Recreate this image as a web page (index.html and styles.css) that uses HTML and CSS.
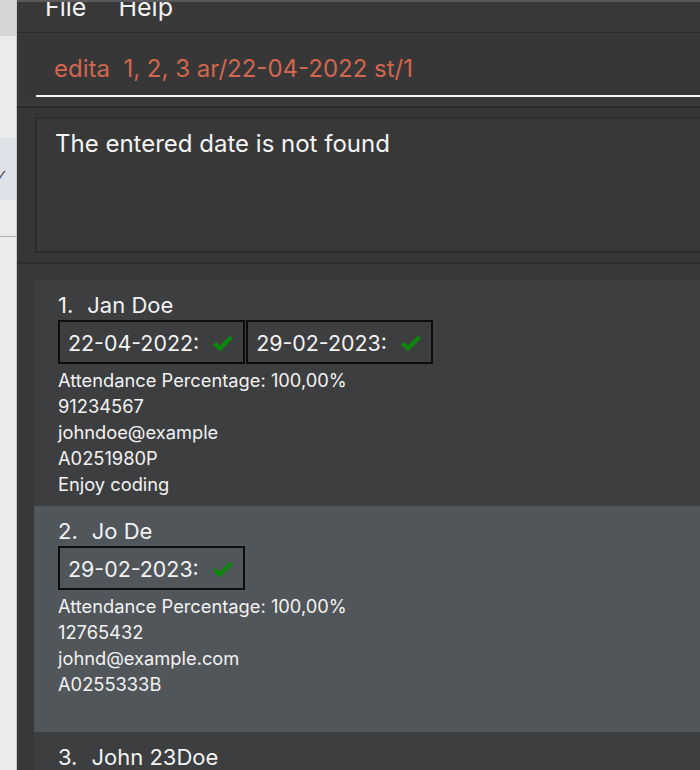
FILE: index.html
```html
<!DOCTYPE html>
<html>
<head>
<meta charset="utf-8">
<link rel="stylesheet" href="styles.css">
</head>
<body>
<div class="page">
  <aside class="sidebar">
    <div class="side-top"></div>
    <div class="side-gap"></div>
    <div class="side-sel"><span class="side-check">✓</span></div>
    <div class="side-gap2"></div>
    <div class="side-rest"></div>
  </aside>
  <main class="app">
    <div class="topline"></div>
    <nav class="menubar">
      <span class="menu-item">File</span>
      <span class="menu-item">Help</span>
    </nav>
    <section class="command">
      <div class="command-input">edita  1, 2, 3 ar/22-04-2022 st/1</div>
    </section>
    <section class="result-pane">
      <div class="result-box">The entered date is not found</div>
    </section>
    <section class="list">
      <div class="card">
        <div class="name"><span class="idx">1.</span>Jan Doe</div>
        <div class="dates">
          <div class="date">22-04-2022:<svg class="check" viewBox="0 0 20 16" width="20" height="16"><path d="M1.5 8.5 L7 13.5 L18.5 2" fill="none" stroke="#0b870b" stroke-width="4.2"/></svg></div>
          <div class="date">29-02-2023:<svg class="check" viewBox="0 0 20 16" width="20" height="16"><path d="M1.5 8.5 L7 13.5 L18.5 2" fill="none" stroke="#0b870b" stroke-width="4.2"/></svg></div>
        </div>
        <div class="lines">
          <div class="line">Attendance Percentage: 100,00%</div>
          <div class="line">91234567</div>
          <div class="line">johndoe@example</div>
          <div class="line">A0251980P</div>
          <div class="line">Enjoy coding</div>
        </div>
      </div>
      <div class="card selected">
        <div class="name"><span class="idx">2.</span>Jo De</div>
        <div class="dates">
          <div class="date">29-02-2023:<svg class="check" viewBox="0 0 20 16" width="20" height="16"><path d="M1.5 8.5 L7 13.5 L18.5 2" fill="none" stroke="#0b870b" stroke-width="4.2"/></svg></div>
        </div>
        <div class="lines">
          <div class="line">Attendance Percentage: 100,00%</div>
          <div class="line">12765432</div>
          <div class="line">johnd@example.com</div>
          <div class="line">A0255333B</div>
          <div class="line"></div>
        </div>
      </div>
      <div class="card">
        <div class="name"><span class="idx">3.</span>John 23Doe</div>
      </div>
    </section>
  </main>
</div>
</body>
</html>
```
FILE: styles.css
```css
html, body {
  margin: 0;
  padding: 0;
  width: 700px;
  height: 770px;
  overflow: hidden;
  background: #383838;
  font-family: "Inter", "Liberation Sans", sans-serif;
}
.page {
  display: flex;
  width: 700px;
  height: 770px;
}
.sidebar {
  width: 17px;
  flex: none;
  display: flex;
  flex-direction: column;
  background: #ebebeb;
  border-right: 1px solid #c8c8c8;
  box-sizing: border-box;
}
.side-top { height: 36px; background: #d6d6d6; }
.side-gap { height: 102px; }
.side-sel {
  height: 62px;
  box-sizing: border-box;
  padding-top: 12px;
  background: #e0e2e9;
  display: flex;
  align-items: center;
  overflow: hidden;
}
.side-check {
  margin-left: -5px;
  font-size: 16px;
  color: #555;
  font-family: "DejaVu Sans", sans-serif;
}
.side-gap2 { height: 36px; border-bottom: 1px solid #b0b0b0; }
.side-rest { flex: 1; }

.app {
  flex: 1;
  display: flex;
  flex-direction: column;
  background: #383838;
  min-width: 0;
}
.topline { height: 2px; background: #5a5a5a; }
.menubar {
  height: 30px;
  flex: none;
  display: flex;
  gap: 32px;
  padding-left: 28px;
  background: #393939;
  border-bottom: 1px solid #2b2b2b;
  overflow: hidden;
  color: #f2f2f2;
  font-size: 25px;
}
.menu-item {
  line-height: 26px;
  margin-top: -8px;
}
.command {
  height: 64px;
  flex: none;
  padding-left: 19px;
  background: #373737;
}
.command-input {
  height: 64px;
  box-sizing: border-box;
  border-bottom: 2px solid #f4f4f4;
  padding-left: 18px;
  padding-top: 22px;
  color: #d3664f;
  font-size: 24px;
  line-height: 28px;
  white-space: pre;
}
.result-pane {
  flex: none;
  margin-top: 9px;
  border-top: 2px solid #2b2b2b;
  border-bottom: 2px solid #2b2b2b;
  padding: 9px 0 9px 18px;
  background: #363636;
}
.result-box {
  height: 136px;
  box-sizing: border-box;
  border: 2px solid #2c2c2c;
  border-right: none;
  background: #383838;
  color: #f4f4f4;
  font-size: 24px;
  line-height: 30px;
  padding: 10px 0 0 18px;
}
.list {
  flex: 1;
  padding: 16px 0 0 17px;
  background: #383838;
  overflow: hidden;
}
.card {
  background: #3d3e40;
  padding: 11px 0 9px 24px;
  color: #f2f2f2;
}
.card.selected { background: #51565a; }
.name {
  font-size: 22px;
  line-height: 28px;
  margin-bottom: 1px;
}
.idx { margin-right: 14px; }
.dates {
  display: flex;
  gap: 1px;
}
.date {
  display: flex;
  align-items: center;
  gap: 14px;
  height: 44px;
  box-sizing: border-box;
  border: 2px solid #0d0d0d;
  padding: 2px 10px 0 8px;
  font-size: 21.4px;
}
.check { display: block; }
.lines { margin-top: 3px; }
.line {
  font-size: 18.3px;
  line-height: 26px;
  height: 26px;
}
```
